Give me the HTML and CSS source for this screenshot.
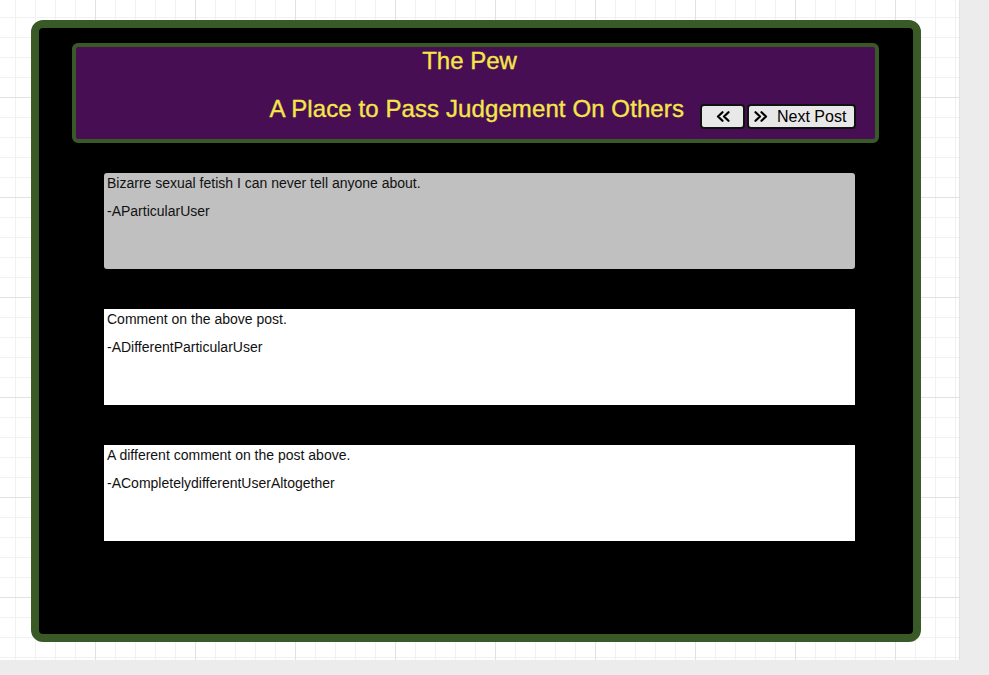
FILE: index.html
```html
<!DOCTYPE html>
<html lang="en">
<head>
<meta charset="utf-8">
<title>The Pew</title>
<link rel="stylesheet" href="styles.css">
</head>
<body>
<div class="canvas">
  <div class="board">
    <header class="banner">
      <h1 class="title">The Pew</h1>
      <div class="subrow">
        <h2 class="subtitle">A Place to Pass Judgement On Others</h2>
        <div class="nav">
          <button class="btn btn-prev" type="button" aria-label="Previous Post">
            <svg class="chev" width="16" height="11" viewBox="0 0 16 11"><path d="M7.5 1.2 L3 5.5 L7.5 9.8 M13.5 1.2 L9 5.5 L13.5 9.8" fill="none" stroke="#000" stroke-width="2.2" stroke-linecap="round" stroke-linejoin="round"/></svg>
          </button>
          <button class="btn btn-next" type="button">
            <svg class="chev" width="16" height="11" viewBox="0 0 16 11"><path d="M2.5 1.2 L7 5.5 L2.5 9.8 M8.5 1.2 L13 5.5 L8.5 9.8" fill="none" stroke="#000" stroke-width="2.2" stroke-linecap="round" stroke-linejoin="round"/></svg>
            <span>Next Post</span>
          </button>
        </div>
      </div>
    </header>
    <article class="card card-post">
      <p>Bizarre sexual fetish I can never tell anyone about.</p>
      <p>-AParticularUser</p>
    </article>
    <article class="card card-comment">
      <p>Comment on the above post.</p>
      <p>-ADifferentParticularUser</p>
    </article>
    <article class="card card-comment">
      <p>A different comment on the post above.</p>
      <p>-ACompletelydifferentUserAltogether</p>
    </article>
  </div>
</div>
</body>
</html>
```

FILE: styles.css
```css
html {
  background: #ececec;
}
body {
  margin: 0;
  font-family: "Liberation Sans", Arial, sans-serif;
}
.canvas {
  width: 959px;
  height: 660px;
  box-sizing: border-box;
  padding-top: 20px;
  padding-left: 31px;
  background-color: #ffffff;
  background-image:
    linear-gradient(to right, #e2e2e2 1px, transparent 1px),
    linear-gradient(to bottom, #e2e2e2 1px, transparent 1px),
    linear-gradient(to right, #f1f1f1 1px, transparent 1px),
    linear-gradient(to bottom, #f1f1f1 1px, transparent 1px);
  background-size: 100px 100px, 100px 100px, 20px 20px, 20px 20px;
  background-position: 95px 0, 0 97px, 15px 0, 0 17px;
  box-shadow: 1px 1px 0 #e3e3e3;
}
.board {
  width: 890px;
  height: 622px;
  box-sizing: border-box;
  border: 8px solid #395a27;
  border-radius: 12px;
  background: #000000;
  padding-top: 15px;
}
.banner {
  width: 807px;
  height: 100px;
  box-sizing: border-box;
  margin-left: 33px;
  border: 4px solid #395a27;
  border-radius: 6px;
  background: #470e53;
  color: #f5e64a;
}
.title {
  margin: 0;
  padding-right: 12px;
  font-size: 24px;
  font-weight: normal;
  line-height: 28px;
  text-align: center;
  -webkit-text-stroke: 0.35px #f5e64a;
}
.subrow {
  margin-top: 20px;
  display: flex;
  justify-content: flex-end;
  align-items: flex-start;
  gap: 16px;
  padding-right: 19px;
}
.subtitle {
  margin: 0;
  font-size: 24px;
  font-weight: normal;
  line-height: 28px;
  letter-spacing: 0.1px;
  -webkit-text-stroke: 0.35px #f5e64a;
}
.nav {
  display: flex;
  gap: 2px;
  margin-top: 9px;
}
.btn {
  height: 25px;
  box-sizing: border-box;
  border: 2px solid #111111;
  border-radius: 4px;
  background: #e8e8e8;
  color: #000000;
  font-family: "Liberation Sans", Arial, sans-serif;
  font-size: 16px;
  margin: 0;
  display: flex;
  align-items: center;
  cursor: pointer;
}
.btn-prev {
  width: 45px;
  justify-content: center;
  padding: 0 0 0 1px;
}
.btn-next {
  width: 109px;
  padding: 0 0 0 4px;
  gap: 8px;
}
.btn span {
  line-height: 18px;
}
.chev {
  display: block;
  flex: none;
}
.card {
  width: 751px;
  height: 96px;
  box-sizing: border-box;
  margin-left: 65px;
  padding: 3px 3px 2px;
  font-size: 14px;
  line-height: 15px;
  color: #111111;
}
.card p {
  margin: 0 0 13px;
}
.card-post {
  margin-top: 30px;
  background: #c0c0c0;
  border-radius: 3px;
}
.card-comment {
  margin-top: 40px;
  background: #ffffff;
}
```
